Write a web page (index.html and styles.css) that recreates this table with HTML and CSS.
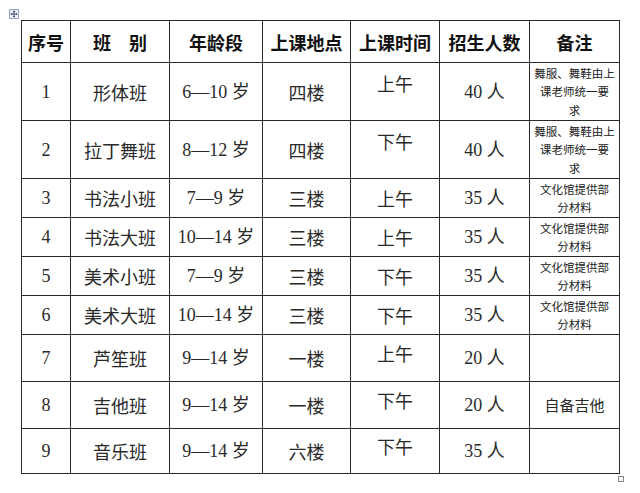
FILE: index.html
```html
<!DOCTYPE html>
<html lang="zh-CN">
<head>
<meta charset="utf-8">
<title>课程表</title>
<link rel="stylesheet" href="styles.css">
</head>
<body>
<div class="page">
  <svg class="move-handle" width="10" height="10" viewBox="0 0 10 10">
    <rect x="0.5" y="0.5" width="9" height="9" fill="#eef0f8" stroke="#9aa3bf" stroke-width="1"/>
    <path d="M5 1.8V8.2M1.8 5H8.2" stroke="#3a4a7a" stroke-width="1"/>
    <path d="M5 1.5L3.8 2.9H6.2Z M5 8.5L3.8 7.1H6.2Z M1.5 5L2.9 3.8V6.2Z M8.5 5L7.1 3.8V6.2Z" fill="#3a4a7a"/>
  </svg>
  <table class="schedule">
    <colgroup>
      <col class="c-no"><col class="c-class"><col class="c-age"><col class="c-place"><col class="c-time"><col class="c-count"><col class="c-note">
    </colgroup>
    <thead>
      <tr class="r-head">
        <th>序号</th><th>班　别</th><th>年龄段</th><th>上课地点</th><th>上课时间</th><th>招生人数</th><th>备注</th>
      </tr>
    </thead>
    <tbody>
      <tr class="r-tall">
        <td class="num">1</td><td>形体班</td><td class="num">6—10 岁</td><td>四楼</td><td><span class="time t-tall">上午</span></td><td class="num">40 人</td><td class="note note3">舞服、舞鞋由上<br>课老师统一要<br>求</td>
      </tr>
      <tr class="r-tall">
        <td class="num">2</td><td>拉丁舞班</td><td class="num">8—12 岁</td><td>四楼</td><td><span class="time t-tall">下午</span></td><td class="num">40 人</td><td class="note note3">舞服、舞鞋由上<br>课老师统一要<br>求</td>
      </tr>
      <tr class="r-short">
        <td class="num">3</td><td>书法小班</td><td class="num">7—9 岁</td><td>三楼</td><td>上午</td><td class="num">35 人</td><td class="note">文化馆提供部<br>分材料</td>
      </tr>
      <tr class="r-short">
        <td class="num">4</td><td>书法大班</td><td class="num">10—14 岁</td><td>三楼</td><td>上午</td><td class="num">35 人</td><td class="note">文化馆提供部<br>分材料</td>
      </tr>
      <tr class="r-short">
        <td class="num">5</td><td>美术小班</td><td class="num">7—9 岁</td><td>三楼</td><td>下午</td><td class="num">35 人</td><td class="note">文化馆提供部<br>分材料</td>
      </tr>
      <tr class="r-short">
        <td class="num">6</td><td>美术大班</td><td class="num">10—14 岁</td><td>三楼</td><td>下午</td><td class="num">35 人</td><td class="note">文化馆提供部<br>分材料</td>
      </tr>
      <tr class="r-mid">
        <td class="num">7</td><td>芦笙班</td><td class="num">9—14 岁</td><td>一楼</td><td><span class="time t-mid">上午</span></td><td class="num">20 人</td><td class="note"></td>
      </tr>
      <tr class="r-mid">
        <td class="num">8</td><td>吉他班</td><td class="num">9—14 岁</td><td>一楼</td><td><span class="time t-mid">下午</span></td><td class="num">20 人</td><td class="note-big">自备吉他</td>
      </tr>
      <tr class="r-last">
        <td class="num">9</td><td>音乐班</td><td class="num">9—14 岁</td><td>六楼</td><td><span class="time t-mid">下午</span></td><td class="num">35 人</td><td class="note"></td>
      </tr>
    </tbody>
  </table>
  <span class="resize-handle"></span>
</div>
</body>
</html>
```

FILE: styles.css
```css
html, body {
  margin: 0;
  padding: 0;
  background: #ffffff;
}

.page {
  position: relative;
  width: 640px;
  height: 493px;
  padding: 20px 0 0 21px;
  box-sizing: border-box;
  overflow: hidden;
}

.move-handle {
  position: absolute;
  left: 9px;
  top: 9px;
}

.resize-handle {
  position: absolute;
  left: 618px;
  top: 476px;
  width: 4px;
  height: 4px;
  border: 1px solid #888;
  background: #fff;
}

.schedule {
  border-collapse: collapse;
  table-layout: fixed;
  width: 599px;
  color: #222;
  font-family: "Liberation Serif", "Noto Sans CJK SC", serif;
  font-size: 18px;
}

.c-no { width: 49px; }
.c-class { width: 99px; }
.c-age { width: 93px; }
.c-place { width: 88px; }
.c-time { width: 89px; }
.c-count { width: 90px; }
.c-note { width: 90px; }

.schedule th,
.schedule td {
  border: 1px solid #2a2a2a;
  padding: 0;
  text-align: center;
  vertical-align: middle;
  line-height: 22px;
  white-space: nowrap;
}

.schedule th {
  font-family: "Noto Sans CJK SC", sans-serif;
  font-weight: 700;
  font-size: 18px;
  color: #111;
}

.schedule td {
  font-family: "Noto Sans CJK SC", sans-serif;
  font-weight: 400;
  color: #2a2a2a;
}

.schedule td.num {
  font-family: "Liberation Serif", "Noto Sans CJK SC", serif;
}

.r-head th { height: 41px; }
.r-tall td { height: 57px; }
.r-short td { height: 38px; }
.r-mid td { height: 46px; }
.r-last td { height: 44px; }

.time {
  display: block;
}

.t-tall { padding-bottom: 18px; }
.t-mid { padding-bottom: 11px; }

.schedule td.note {
  font-size: 11.5px;
  line-height: 18px;
  color: #222;
}

.schedule td.note3 {
  line-height: 18.5px;
}

.schedule td.note-big {
  font-size: 15px;
}
```
